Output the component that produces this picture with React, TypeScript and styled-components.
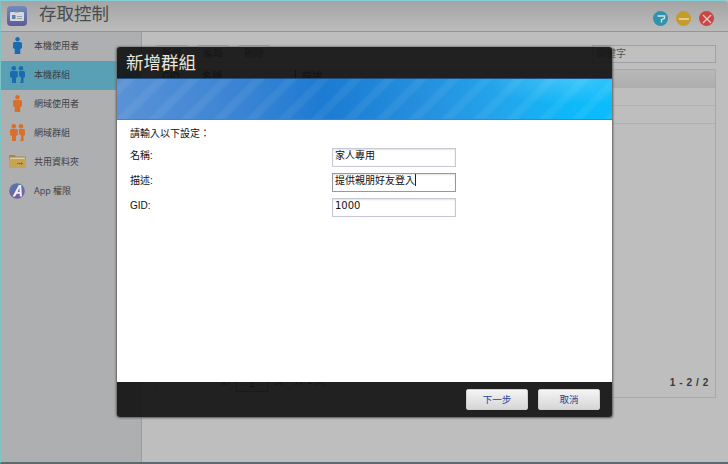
import React from "react";
import styled, { createGlobalStyle } from "styled-components";

const Global = createGlobalStyle`
  html, body { margin: 0; padding: 0; width: 728px; height: 464px; overflow: hidden; background: #bdbdbd; }
  * { box-sizing: border-box; }
`;
const FONT = `"Liberation Sans", "Noto Sans CJK TC", sans-serif`;

const Page = styled.div`
  position: relative; width: 728px; height: 464px; overflow: hidden;
  display: flex; flex-direction: column; font-family: ${FONT};
  background: #bebebe; border-top: 1px solid #7fd0d8; border-left: 1px solid #7fc4c4;
  border-bottom: 2px solid #5f6a6e; border-top-right-radius: 4px;
`;
const Header = styled.header`
  height: 31px; flex: none; display: flex; align-items: center; padding: 0 5px 0 6px;
  background: linear-gradient(#a4a4a5, #bcbcbc); border-bottom: 1px solid #959595;
`;
const Title = styled.h1`
  margin: 0 0 6px 12px; font-size: 17.5px; font-weight: 400; color: #4a4d50;
  font-family: "Noto Sans CJK TC", sans-serif; line-height: 24px;
`;
const WinButtons = styled.div`
  margin-left: auto; display: flex; gap: 8px; margin-top: 5px; padding-right: 9px;
`;
const WinButton = styled.div<{ $c: string }>`
  width: 15px; height: 15px; border-radius: 50%; background: ${p => p.$c};
  display: flex; align-items: center; justify-content: center;
`;
const Body = styled.div`
  flex: 1; display: flex; min-height: 0;
`;
const Sidebar = styled.nav`
  width: 141px; flex: none; background: #aeafb1; border-right: 1px solid #9c9c9c;
  display: flex; flex-direction: column;
`;
const NavItem = styled.div<{ $active?: boolean }>`
  height: 29px; display: flex; align-items: center; padding: 0 0 2px 7px;
  background: ${p => (p.$active ? "#5aa0b5" : "transparent")};
  font-size: 9px; color: #3e4043;
`;
const NavLabel = styled.span`
  font-family: "Open Sans", "Noto Sans CJK TC", sans-serif;
`;
const NavIcon = styled.div`
  width: 18px; height: 20px; margin-right: 8px; flex: none; display: flex; align-items: center; justify-content: center;
`;
const Content = styled.main`
  flex: 1; min-width: 0; display: flex; flex-direction: column; padding: 13px 12px 0 13px; background: #bebebe;
`;
const Toolbar = styled.div`
  height: 18px; flex: none; display: flex; gap: 7px;
`;
const ToolButton = styled.div`
  width: 34px; height: 18px; border: 1px solid #a2a2a2; border-radius: 3px; background: #c4c4c4;
  font-size: 10px; line-height: 15px; text-align: center; color: #333;
`;
const Search = styled.div`
  margin-left: auto; width: 124px; height: 18px; border: 1px solid #a0a0a6; background: #c0c0c0;
  font-size: 10px; line-height: 16px; color: #55565a; padding-left: 3px;
`;
const Table = styled.div`
  margin-top: 6px; height: 329px; border: 1px solid #a8a8a8;
  display: flex; flex-direction: column;
`;
const THead = styled.div`
  height: 18px; flex: none; background: linear-gradient(#b8b8b8, #aeaeae);
  display: grid; grid-template-columns: 40px 93px 1fr; padding-left: 6px;
  font-size: 10px; font-weight: 700; line-height: 13px; color: #111;
`;
const THCell = styled.div<{ $line?: boolean }>`
  height: 18px; padding-left: ${p => (p.$line ? "6px" : "0")};
  border-left: ${p => (p.$line ? "1px solid #111" : "none")};
`;
const TRow = styled.div`
  height: 18px; flex: none; border-bottom: 1px solid #b2b2b2;
`;
const PagerRow = styled.div`
  margin-top: auto; height: 30px; flex: none; display: flex; align-items: center; padding: 0 6px 0 0;
`;
const PagerControls = styled.div`
  display: flex; align-items: center; gap: 6px; padding-left: 64px; margin-top: -6px;
  font-size: 10px; color: #111;
`;
const PageBox = styled.div`
  width: 32px; height: 17px; margin-top: 8px; border: 1px solid #6a6a6a; text-align: center; line-height: 15px;
`;
const PagerText = styled.div`
  margin-left: auto; font-size: 10px; font-weight: 700; color: #3a3a3a; letter-spacing: .6px;
`;
const Dialog = styled.section`
  position: absolute; left: 116px; top: 46px; width: 495px; height: 370px;
  display: flex; flex-direction: column;
  border-radius: 3px; overflow: hidden;
  box-shadow: -1px 0 2px #6a6a6a, 1px 1px 2px #6a6a6a, 0 0 3px #777;
`;
const DialogTitle = styled.h2`
  margin: 0; height: 31px; flex: none; padding: 2px 0 0 9px; background: rgba(20,20,20,.93);
  color: #ece6da; font-size: 17.5px; font-weight: 400; line-height: 25px;
  font-family: "Noto Sans CJK TC", sans-serif;
`;
const Banner = styled.div`
  height: 42px; flex: none; border-top: 1px solid #1a4f7f; border-bottom: 1px solid #1b94d0;
  background:
    repeating-linear-gradient(135deg, rgba(255,255,255,0) 0 3px, rgba(255,255,255,.06) 6px 11px, rgba(255,255,255,0) 14px 23px),
    radial-gradient(90px 26px at 455px 0px, rgba(190,225,250,.28), rgba(190,225,250,0)),
    linear-gradient(90deg, #5a92d6 0%, #3a84d4 25%, #1c7bd2 42%, #2590de 62%, #22a6ec 78%, #0cb9f9 92%, #0bbcfb 100%);
`;
const DialogBody = styled.form`
  flex: 1; min-height: 0; background: #fff; padding: 7px 13px 0; display: flex; flex-direction: column;
  font-size: 10px; color: #111;
`;
const Intro = styled.div`
  height: 14px; line-height: 14px; margin-bottom: 7px; font-size: 10px;
`;
const Row = styled.div`
  height: 25px; display: grid; grid-template-columns: 202px 124px; align-items: start;
`;
const Label = styled.label`
  line-height: 16px; font-size: 10px; color: #111;
`;
const Field = styled.div<{ $focus?: boolean }>`
  height: 19px; border: 1px solid ${p => (p.$focus ? "#999" : "#c8c8d4")};
  box-shadow: inset 0 1px 2px #e2e2e6; padding: 0 2px; font-size: 10px; line-height: 14px; color: #111; white-space: nowrap;
  font-family: "DejaVu Sans", "Noto Sans CJK TC", sans-serif;
`;
const Caret = styled.span`
  display: inline-block; width: 1px; height: 12px; background: #222; vertical-align: -2px;
`;
const DialogFooter = styled.footer`
  height: 35px; flex: none; background: rgba(20,20,20,.93); display: flex; justify-content: flex-end; gap: 10px;
  padding: 7px 12px 0 0;
`;
const Btn = styled.button`
  width: 62px; height: 21px; border: 1px solid #cfcfcf; border-radius: 2px; padding: 0 0 2px;
  background: linear-gradient(#f4f4f4, #d6d6d6); color: #24439a; font-size: 9.5px; font-family: ${FONT};
`;

const Person = ({ c }: { c: string }) => (
  <svg width="9" height="17" viewBox="0 0 9 17">
    <circle cx="4.5" cy="2.200" r="2.200" fill={c} />
    <path d="M0 6.500Q0 5 1.500 5h6Q9 5 9 6.500V11L7.300 12V17H1.700V12L0 11Z" fill={c} />
  </svg>
);
const People = ({ c }: { c: string }) => (
  <svg width="15" height="17" viewBox="0 0 15 17">
    <circle cx="3.800" cy="2.300" r="2.300" fill={c} />
    <circle cx="11" cy="2.300" r="2.300" fill={c} />
    <path d="M0 6.500Q0 5 1.500 5h5.300Q7.800 5 7.800 6.500V11L6 12V17H2V12L0 11Z" fill={c} />
    <path d="M9 5h4.500Q15 5 15 6.500V11L13.500 12V17H9.800L11 15.500V11.500L9 10Z" fill={c} />
  </svg>
);
const Folder = () => (
  <svg width="17" height="13" viewBox="0 0 17 13">
    <path d="M0 1q0-1 1-1h4.500l1.500 1.500h9q1 0 1 1V12q0 1-1 1H1q-1 0-1-1Z" fill="#a9853c" />
    <path d="M0 4h17v8q0 1-1 1H1q-1 0-1-1Z" fill="#c7a353" />
    <path d="M1 2.600h15v1.300H1Z" fill="#dccfae" />
    <path d="M8 8h4V6.700l2 1.800-2 1.800V9H8Z" fill="#8a6f38" />
  </svg>
);
const AppIcon = () => (
  <svg width="16" height="16" viewBox="0 0 16 16">
    <defs>
      <linearGradient id="ag" x1="0" y1="0" x2="0" y2="1">
        <stop offset="0" stopColor="#5078b8" />
        <stop offset="1" stopColor="#7f5a9e" />
      </linearGradient>
    </defs>
    <circle cx="8" cy="8" r="7.800" fill="url(#ag)" />
    <path d="M3.500 13.500L9.800 2h2.400L13 13.500h-2.100l-.2-2.800H7.800L6 13.500ZM8.700 9h1.900L10.300 4.800Z" fill="#eeeef6" />
  </svg>
);
const TitleIcon = () => (
  <svg width="20" height="20" viewBox="0 0 20 20">
    <defs>
      <linearGradient id="tg" x1="0" y1="0" x2="0" y2="1">
        <stop offset="0" stopColor="#6f8cc0" />
        <stop offset="1" stopColor="#5f5a94" />
      </linearGradient>
    </defs>
    <rect width="20" height="20" rx="4" fill="url(#tg)" />
    <rect x="3" y="6" width="14" height="9" rx="1" fill="#d5dae0" />
    <rect x="8" y="4.500" width="4" height="2" fill="#7f8a9c" />
    <rect x="5" y="9" width="3.500" height="4" fill="#5f7fa4" />
    <rect x="10" y="10" width="5" height="1" fill="#9aa2ad" />
    <rect x="10" y="12" width="5" height="1" fill="#9aa2ad" />
  </svg>
);

export default function App() {
  return (
    <>
      <Global />
      <Page>
        <Header>
          <TitleIcon />
          <Title>存取控制</Title>
          <WinButtons>
            <WinButton $c="#2f94ab">
              <svg width="10" height="10" viewBox="0 0 10 10">
                <path d="M1.500 2h7v2.400L5.500 5.600V8.500" fill="none" stroke="#cfe2e6" strokeWidth="1.400" />
              </svg>
            </WinButton>
            <WinButton $c="#c49c2c">
              <svg width="10" height="10" viewBox="0 0 10 10">
                <path d="M0 5h10" stroke="#e6dcb8" strokeWidth="1.400" />
              </svg>
            </WinButton>
            <WinButton $c="#cc4444">
              <svg width="10" height="10" viewBox="0 0 10 10">
                <path d="M1 1l8 8M9 1l-8 8" stroke="#ecc4c4" strokeWidth="1.400" />
              </svg>
            </WinButton>
          </WinButtons>
        </Header>
        <Body>
          <Sidebar>
            <NavItem><NavIcon><Person c="#1a6cb0" /></NavIcon><NavLabel>本機使用者</NavLabel></NavItem>
            <NavItem $active><NavIcon><People c="#1a6cb0" /></NavIcon><NavLabel>本機群組</NavLabel></NavItem>
            <NavItem><NavIcon><Person c="#d8702c" /></NavIcon><NavLabel>網域使用者</NavLabel></NavItem>
            <NavItem><NavIcon><People c="#d8702c" /></NavIcon><NavLabel>網域群組</NavLabel></NavItem>
            <NavItem><NavIcon><Folder /></NavIcon><NavLabel>共用資料夾</NavLabel></NavItem>
            <NavItem><NavIcon><AppIcon /></NavIcon><NavLabel>App 權限</NavLabel></NavItem>
          </Sidebar>
          <Content>
            <Toolbar>
              <ToolButton>新增</ToolButton>
              <ToolButton>編輯</ToolButton>
              <ToolButton>刪除</ToolButton>
              <Search>關鍵字</Search>
            </Toolbar>
            <Table>
              <THead>
                <THCell>GID</THCell>
                <THCell>名稱</THCell>
                <THCell $line>描述</THCell>
              </THead>
              <TRow />
              <TRow />
              <PagerRow>
                <PagerControls>
                  <span>第</span>
                  <PageBox>1</PageBox>
                  <span>頁，共 1 頁</span>
                </PagerControls>
                <PagerText>1 - 2 / 2</PagerText>
              </PagerRow>
            </Table>
          </Content>
        </Body>
        <Dialog>
          <DialogTitle>新增群組</DialogTitle>
          <Banner />
          <DialogBody>
            <Intro>請輸入以下設定：</Intro>
            <Row><Label>名稱:</Label><Field>家人專用</Field></Row>
            <Row><Label>描述:</Label><Field $focus>提供親朋好友登入<Caret /></Field></Row>
            <Row><Label>GID:</Label><Field>1000</Field></Row>
          </DialogBody>
          <DialogFooter>
            <Btn type="button">下一步</Btn>
            <Btn type="button">取消</Btn>
          </DialogFooter>
        </Dialog>
      </Page>
    </>
  );
}
